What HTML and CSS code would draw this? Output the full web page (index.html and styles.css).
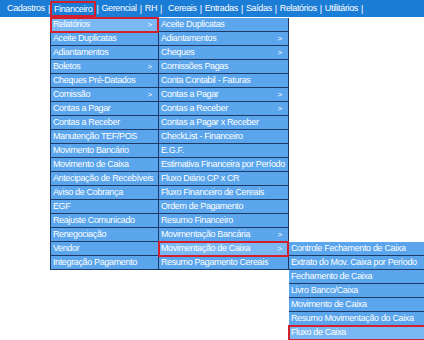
FILE: index.html
```html
<!DOCTYPE html>
<html lang="pt">
<head>
<meta charset="utf-8">
<link rel="stylesheet" href="styles.css">
</head>
<body>
<nav class="bar">
  <span class="item">Cadastros</span><span class="sep">|</span>
  <div class="item open">Financeiro
    <ul class="menu col1">
      <li class="hl"><span>Relatórios</span><span class="arr">&gt;</span>
        <ul class="menu col2">
          <li><span>Aceite Duplicatas</span></li>
          <li><span>Adiantamentos</span><span class="arr">&gt;</span></li>
          <li><span>Cheques</span><span class="arr">&gt;</span></li>
          <li><span>Comissões Pagas</span></li>
          <li><span>Conta Contabil - Faturas</span></li>
          <li><span>Contas a Pagar</span><span class="arr">&gt;</span></li>
          <li><span>Contas a Receber</span><span class="arr">&gt;</span></li>
          <li><span>Contas a Pagar x Receber</span></li>
          <li><span>CheckList - Financeiro</span></li>
          <li><span>E.G.F.</span></li>
          <li><span>Estimativa Financeira por Período</span></li>
          <li><span>Fluxo Diário CP x CR</span></li>
          <li><span>Fluxo Financeiro de Cereais</span></li>
          <li><span>Ordem de Pagamento</span></li>
          <li><span>Resumo Financeiro</span></li>
          <li><span>Movimentação Bancária</span><span class="arr">&gt;</span></li>
          <li class="hl"><span>Movimentação de Caixa</span><span class="arr">&gt;</span>
            <ul class="menu col3">
              <li><span>Controle Fechamento de Caixa</span></li>
              <li><span>Extrato do Mov. Caixa por Período</span></li>
              <li><span>Fechamento de Caixa</span></li>
              <li><span>Livro Banco/Caixa</span></li>
              <li><span>Movimento de Caixa</span></li>
              <li><span>Resumo Movimentação do Caixa</span></li>
              <li class="hl"><span>Fluxo de Caixa</span></li>
            </ul>
          </li>
          <li><span>Resumo Pagamento Cereais</span></li>
        </ul>
      </li>
      <li><span>Aceite Duplicatas</span></li>
      <li><span>Adiantamentos</span></li>
      <li><span>Boletos</span><span class="arr">&gt;</span></li>
      <li><span>Cheques Pré-Datados</span></li>
      <li><span>Comissão</span><span class="arr">&gt;</span></li>
      <li><span>Contas a Pagar</span></li>
      <li><span>Contas a Receber</span></li>
      <li><span>Manutenção TEF/POS</span></li>
      <li><span>Movimento Bancário</span></li>
      <li><span>Movimento de Caixa</span></li>
      <li><span>Antecipação de Recebíveis</span></li>
      <li><span>Aviso de Cobrança</span></li>
      <li><span>EGF</span></li>
      <li><span>Reajuste Comunicado</span></li>
      <li><span>Renegociação</span></li>
      <li><span>Vendor</span></li>
      <li><span>Integração Pagamento</span></li>
    </ul>
  </div><span class="sep">|</span>
  <span class="item">Gerencial</span><span class="sep">|</span>
  <span class="item">RH</span><span class="sep">|</span>
  <span class="item wide">Cereais</span><span class="sep">|</span>
  <span class="item">Entradas</span><span class="sep">|</span>
  <span class="item">Saídas</span><span class="sep">|</span>
  <span class="item">Relatórios</span><span class="sep">|</span>
  <span class="item">Utilitários</span><span class="sep">|</span>
</nav>
</body>
</html>
```
FILE: styles.css
```css
html, body {
  margin: 0;
  padding: 0;
  background: #ffffff;
}
body {
  font-family: "Liberation Sans", Arial, sans-serif;
  font-size: 9px;
  letter-spacing: -0.35px;
  color: #ffffff;
  width: 424px;
  height: 340px;
  overflow: hidden;
}
.bar {
  display: flex;
  align-items: center;
  height: 17px;
  padding-left: 4px;
  background: #1c7dd6;
}
.item {
  padding: 0 3px;
  line-height: 13px;
  white-space: nowrap;
}
.item.wide {
  padding-left: 6px;
}
.sep {
  width: 2px;
  text-align: center;
}
.open {
  position: relative;
  border: 2px solid #d2202f;
  padding: 0 2px;
  margin: 1px 0 0 0;
  height: 12px;
  line-height: 12px;
}
.menu {
  list-style: none;
  margin: 0;
  padding: 0;
  position: absolute;
  background: #5aa5ec;
  border-right: 1px solid #1d3a66;
  z-index: 3;
}
.menu li {
  box-sizing: border-box;
  width: 100%;
  position: relative;
  display: flex;
  justify-content: space-between;
  align-items: center;
  height: 14px;
  line-height: 13px;
  border-bottom: 1px solid #1d3a66;
  padding: 0 6px 0 2px;
  background: #5aa5ec;
  white-space: nowrap;
}
.menu li.hl {
  background: #79b8f3;
  outline: 2px solid #d2202f;
  outline-offset: -1px;
  z-index: 2;
}
.arr {
  font-size: 8px;
}
.col1 {
  top: 15px;
  left: -2px;
  width: 107px;
  border-left: 1px solid #1d3a66;
}
.col2 {
  top: 0;
  left: calc(100% + 1px);
  width: 129px;
}
.col3 {
  top: 0;
  left: calc(100% + 1px);
  width: 136px;
}
```
